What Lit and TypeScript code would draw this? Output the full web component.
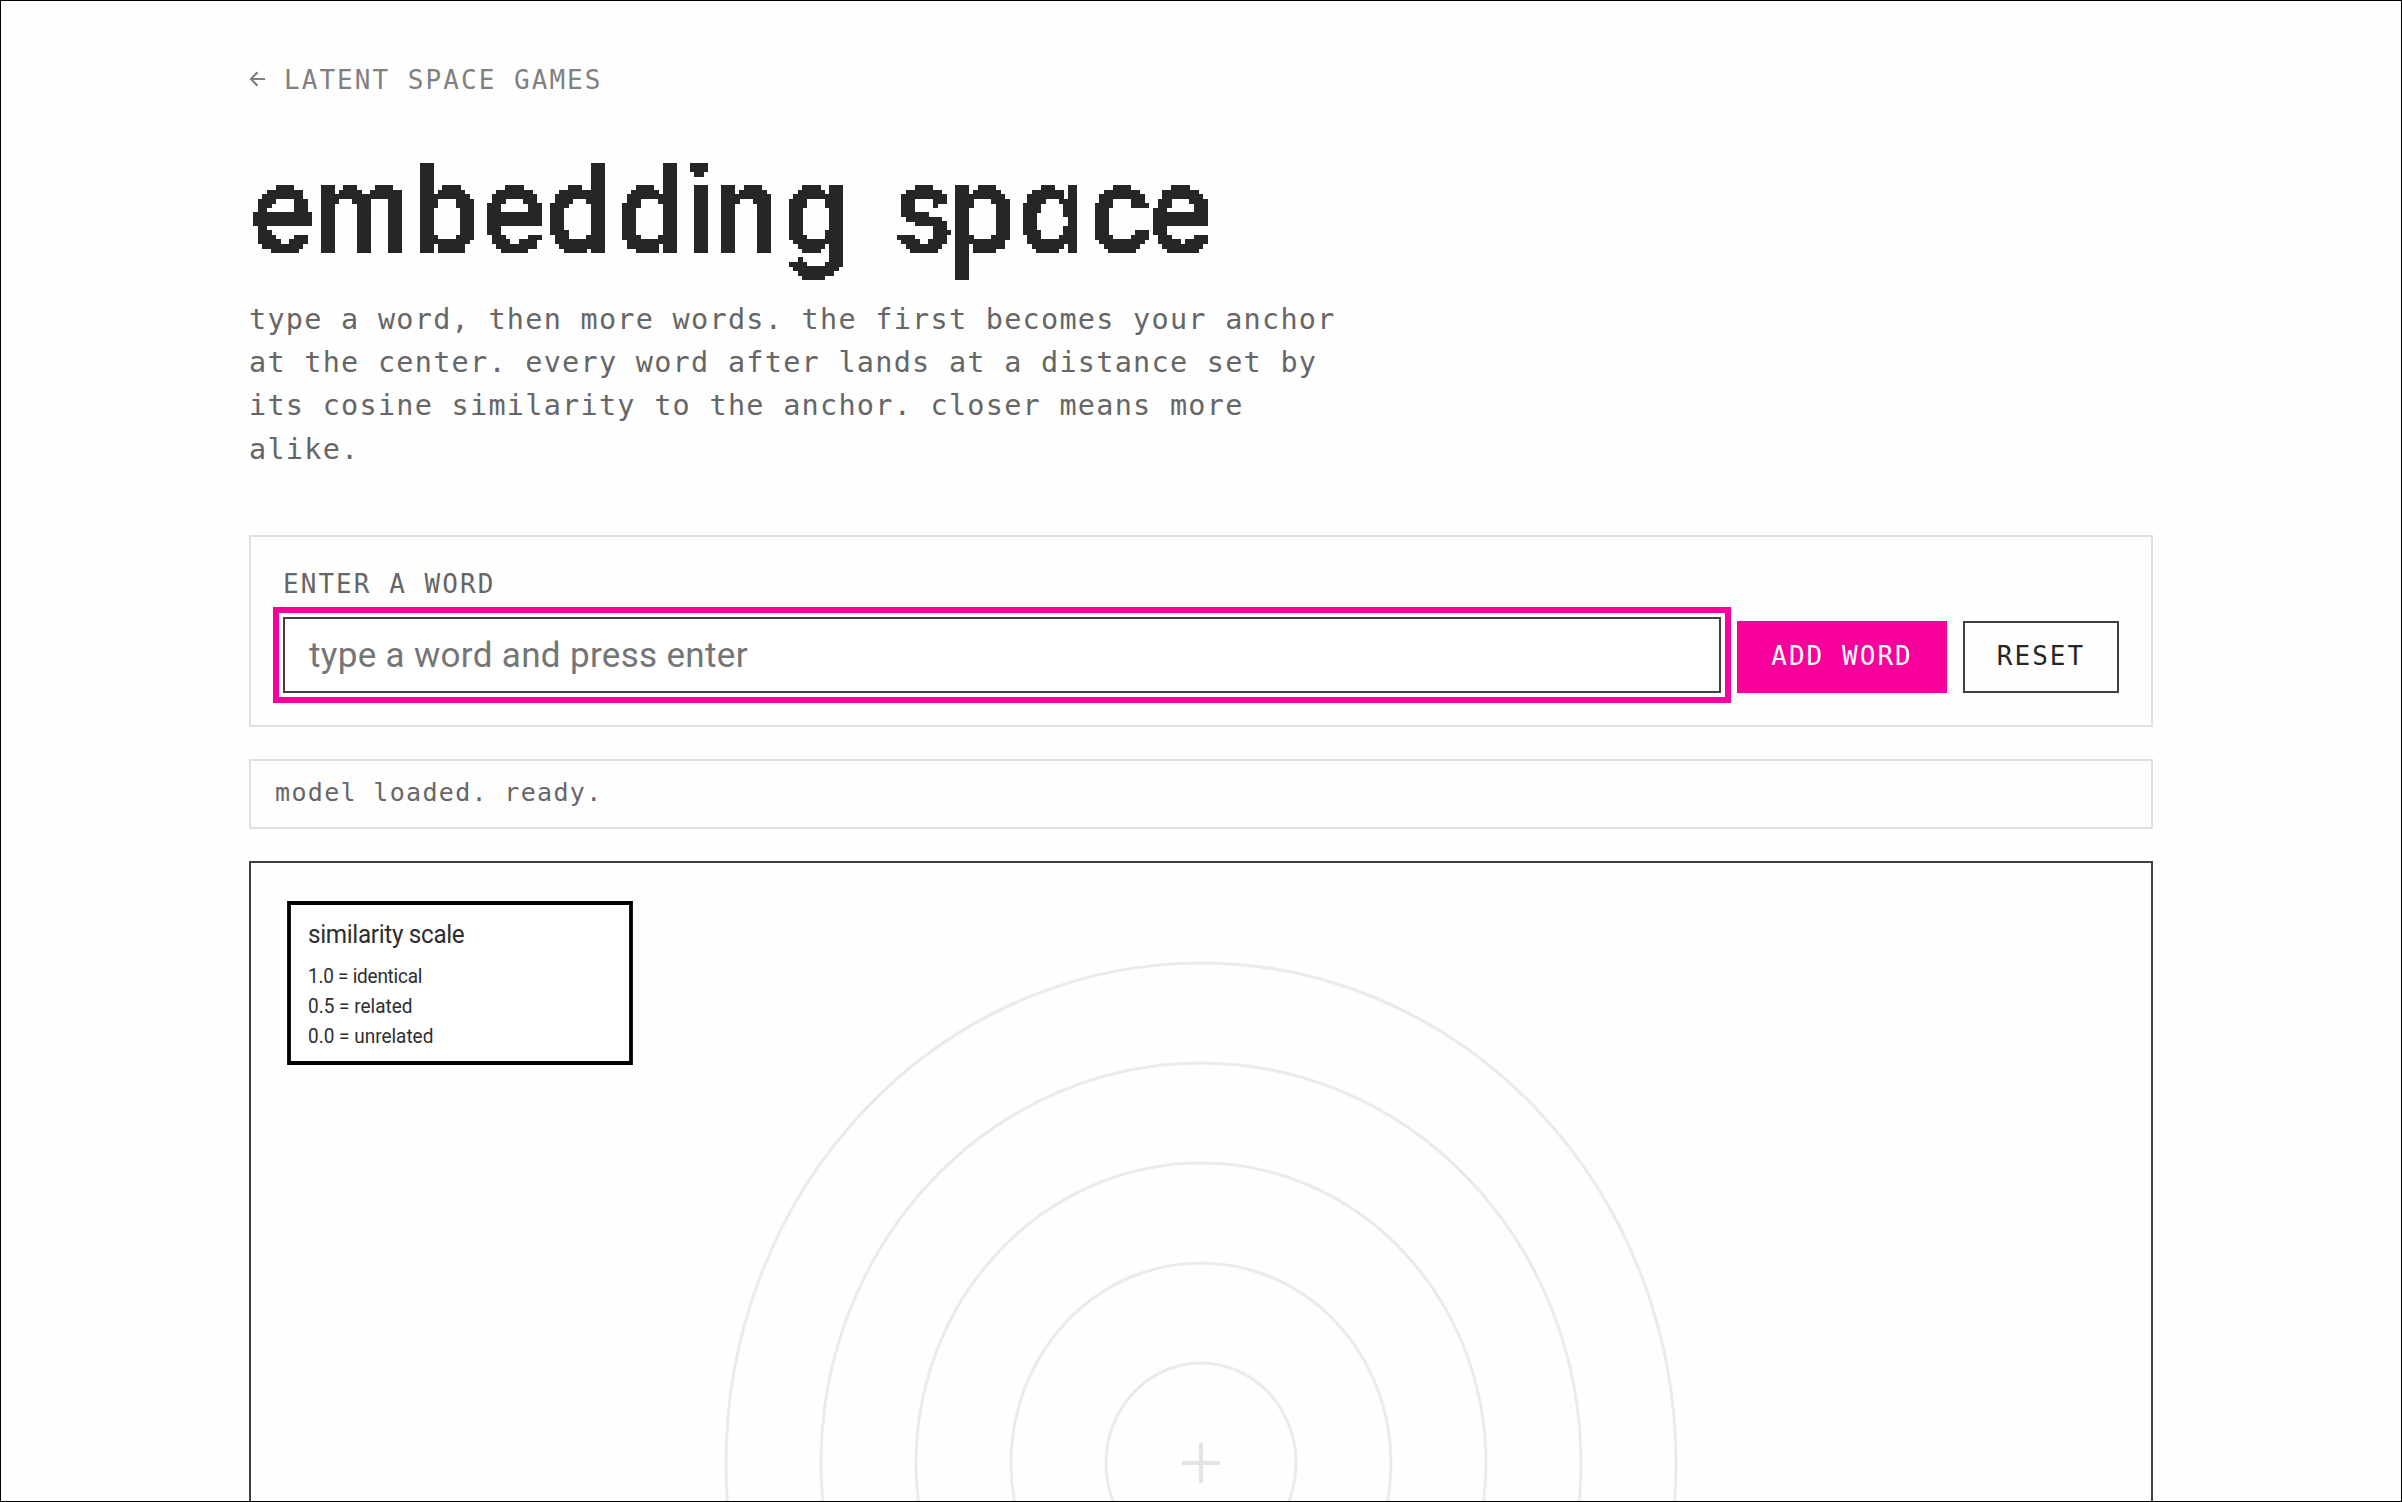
import { LitElement, html, svg, css } from "lit";
import { customElement } from "lit/decorators.js";

const RINGS = [50, 100, 150, 200, 250];

const LEGEND = [
  { y: 60, text: "1.0 = identical", width: 60.2 },
  { y: 75, text: "0.5 = related", width: 55 },
  { y: 90, text: "0.0 = unrelated", width: 66 },
];

// Left origin of each letter of the heading, in heading pixels.
const TITLE = "embedding space";
const TITLE_X = [1.2, 64, 163, 232.5, 296.5, 367.5, 436.5, 464.5, 533.5, 600, 644.5, 698.5, 769.5, 840, 900];
const SQUEEZE = 0.895;

@customElement("pixel-title")
export class PixelTitle extends LitElement {
  static styles = css`
    :host {
      display: block;
    }
    .art {
      display: block;
      width: 1000px;
      height: 135px;
      overflow: visible;
    }
    .word {
      font-family: Inter, "Liberation Sans", sans-serif;
      font-size: 122px;
      font-weight: 600;
      font-feature-settings: "cv11" 1, "kern" 0;
      fill: #262626;
    }
  `;

  render() {
    return html`
      <svg class="art" viewBox="0 0 1000 135" role="heading" aria-level="1">
        <defs>
          <filter
            id="mosaic"
            filterUnits="userSpaceOnUse"
            x="0"
            y="9"
            width="1000"
            height="126"
            color-interpolation-filters="sRGB"
          >
            <feComponentTransfer in="SourceGraphic" result="hard">
              <feFuncA type="discrete" tableValues="0 1"></feFuncA>
            </feComponentTransfer>
            <feFlood x="2" y="11" width="1" height="1" result="a"></feFlood>
            <feFlood x="6" y="11" width="1" height="1" result="b"></feFlood>
            <feFlood x="2" y="15" width="1" height="1" result="c"></feFlood>
            <feFlood x="6" y="15" width="1" height="1" result="d"></feFlood>
            <feMerge x="0" y="9" width="9" height="9">
              <feMergeNode in="a"></feMergeNode>
              <feMergeNode in="b"></feMergeNode>
              <feMergeNode in="c"></feMergeNode>
              <feMergeNode in="d"></feMergeNode>
            </feMerge>
            <feTile result="grid"></feTile>
            <feComposite in="hard" in2="grid" operator="in"></feComposite>
            <feMorphology operator="dilate" radius="2"></feMorphology>
          </filter>
        </defs>
        <g filter="url(#mosaic)">
          <g transform="scale(${SQUEEZE} 1)">
            <text class="word" y="99" x=${TITLE_X.map((x) => x / SQUEEZE).join(" ")}>${TITLE}</text>
          </g>
        </g>
      </svg>
    `;
  }
}

@customElement("similarity-map")
export class SimilarityMap extends LitElement {
  static styles = css`
    :host {
      display: block;
      border: 2px solid #404040;
    }
    .map {
      display: block;
      width: 1900px;
      height: 1200px;
    }
    .ring {
      fill: none;
      stroke: #ebebeb;
      stroke-width: 1.6;
    }
    .cross {
      stroke: #e3e3e3;
      stroke-width: 2;
    }
    .box {
      fill: #fff;
      stroke: #000;
      stroke-width: 2;
    }
    .head,
    .item {
      font-family: Roboto, "Liberation Sans", sans-serif;
      fill: #2e2e2e;
    }
    .head {
      font-size: 12.8px;
    }
    .item {
      font-size: 10px;
    }
  `;

  render() {
    return html`
      <svg class="map" viewBox="0 0 1000 600" preserveAspectRatio="none">
        ${RINGS.map((r) => svg`<circle class="ring" cx="500" cy="300" r=${r}></circle>`)}
        <path class="cross" d="M490 300H510M500 290V310"></path>
        <rect class="box" x="20" y="20" width="180" height="80"></rect>
        <text class="head" x="30" y="40" textLength="82.5">similarity scale</text>
        ${LEGEND.map(
          (l) => svg`<text class="item" x="30" y=${l.y} textLength=${l.width}>${l.text}</text>`,
        )}
      </svg>
    `;
  }
}

@customElement("app-root")
export class AppRoot extends LitElement {
  static styles = css`
    :host {
      display: block;
      box-sizing: border-box;
      width: 2402px;
      height: 1502px;
      overflow: hidden;
      border: 1px solid #000;
      background: #fefefe;
      color: #262626;
      font-family: "DejaVu Sans Mono", "Liberation Mono", monospace;
    }
    * {
      box-sizing: border-box;
    }
    .page {
      width: 1904px;
      margin: 0 auto;
      padding-top: 58px;
      display: flex;
      flex-direction: column;
    }
    .back {
      display: flex;
      align-items: center;
      gap: 18px;
      height: 40px;
      line-height: 44px;
      font-size: 26px;
      letter-spacing: 2.04px;
      color: #808080;
    }
    .caption {
      padding-top: 2px;
    }
    .arrow {
      width: 17px;
      height: 16px;
      fill: none;
      stroke: #808080;
      stroke-width: 2.2;
    }
    .title {
      margin-top: 55px;
      height: 135px;
    }
    .intro {
      margin: 9px 0 0;
      width: 1100px;
      font-size: 28.5px;
      letter-spacing: 1.26px;
      line-height: 43.2px;
      color: #666;
      white-space: pre-line;
    }
    .entry {
      display: flex;
      align-items: flex-end;
      gap: 16px;
      height: 192px;
      margin-top: 64px;
      padding: 32px;
      border: 2px solid #e0e0e0;
    }
    .field {
      flex: 1;
      display: flex;
      flex-direction: column;
    }
    .label {
      height: 48px;
      line-height: 31px;
      font-size: 26px;
      letter-spacing: 2.04px;
      color: #666;
    }
    .input {
      height: 76px;
      width: 100%;
      padding: 2px 24px 0;
      border: 2px solid #404040;
      border-radius: 0;
      outline: 6px solid #f7009b;
      outline-offset: 4px;
      background: #fff;
      font-family: Roboto, "Liberation Sans", sans-serif;
      font-size: 35px;
      letter-spacing: 0.33px;
    }
    .input::placeholder {
      color: #757575;
      opacity: 1;
    }
    .btn {
      height: 72px;
      padding: 0 0 1px;
      border: 2px solid #404040;
      border-radius: 0;
      background: #fefefe;
      color: #262626;
      font-family: inherit;
      font-size: 26px;
      letter-spacing: 2.04px;
      text-align: center;
    }
    .add {
      width: 210px;
      border-color: #f7009b;
      background: #f7009b;
      color: #fff;
    }
    .reset {
      width: 156px;
    }
    .status {
      height: 70px;
      margin-top: 32px;
      padding: 0 24px;
      line-height: 63px;
      border: 2px solid #e0e0e0;
      font-size: 25px;
      letter-spacing: 1.33px;
      color: #666;
    }
    .map {
      margin-top: 32px;
    }
  `;

  render() {
    return html`
      <main class="page">
        <a class="back">
          <svg class="arrow" viewBox="0 0 17 16"><path d="M16 8H2M8.5 1.2L2 8l6.5 6.8"></path></svg>
          <span class="caption">LATENT SPACE GAMES</span>
        </a>
        <pixel-title class="title"></pixel-title>
        <p class="intro">${
          "type a word, then more words. the first becomes your anchor\n" +
          "at the center. every word after lands at a distance set by\n" +
          "its cosine similarity to the anchor. closer means more\n" +
          "alike."
        }</p>
        <section class="entry">
          <div class="field">
            <label class="label">ENTER A WORD</label>
            <input class="input" placeholder="type a word and press enter" />
          </div>
          <button class="btn add">ADD WORD</button>
          <button class="btn reset">RESET</button>
        </section>
        <div class="status">model loaded. ready.</div>
        <similarity-map class="map"></similarity-map>
      </main>
    `;
  }
}
